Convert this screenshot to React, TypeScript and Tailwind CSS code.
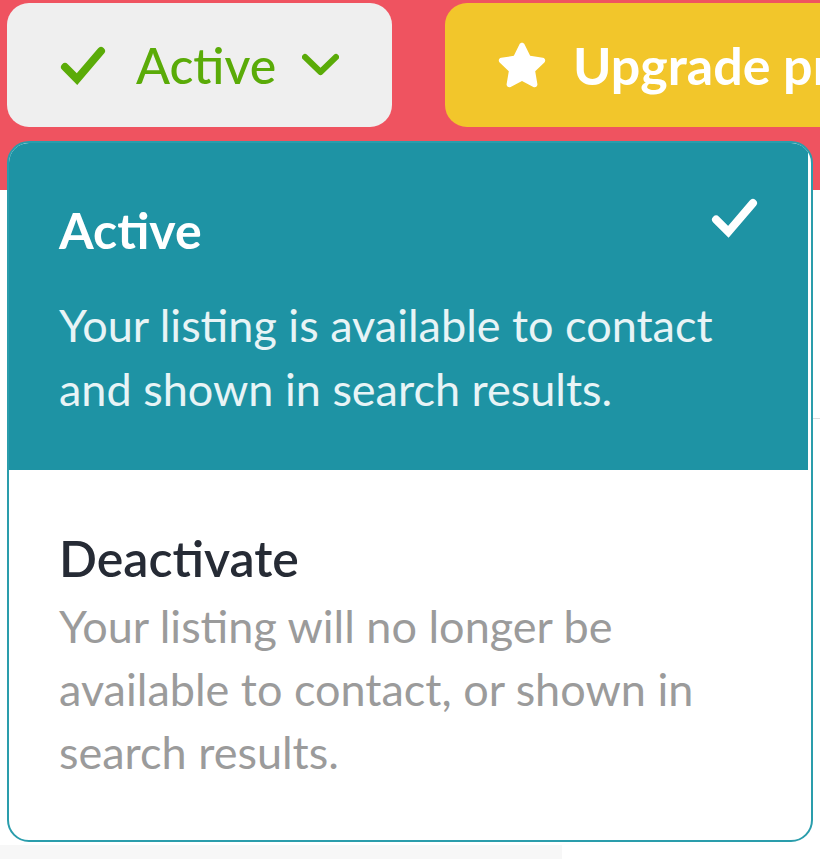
import React from 'react';
import { FaStar } from 'react-icons/fa';

const ChevronDown: React.FC<{ className?: string }> = ({ className }) => (
  <svg viewBox="0 0 37 24" className={className} fill="none">
    <polyline points="3,4 18.5,19 34,4" stroke="currentColor" strokeWidth="6" strokeLinecap="round" strokeLinejoin="round" />
  </svg>
);

const Check: React.FC<{ className?: string }> = ({ className }) => (
  <svg viewBox="0 0 46 40" className={className} fill="none">
    <polyline points="5,22 17,34 41,6" stroke="currentColor" strokeWidth="8" strokeLinecap="round" strokeLinejoin="miter" />
  </svg>
);

interface StatusOption {
  title: string;
  description: string;
  selected: boolean;
}

const options: StatusOption[] = [
  {
    title: 'Active',
    description: 'Your listing is available to contact and shown in search results.',
    selected: true,
  },
  {
    title: 'Deactivate',
    description: 'Your listing will no longer be available to contact, or shown in search results.',
    selected: false,
  },
];

export default function App() {
  return (
    <div className="relative w-[820px] h-[859px] overflow-hidden bg-white flex flex-col font-['Lato','Open_Sans',sans-serif]">
      <header className="h-[190px] shrink-0 bg-[#ef5360] flex items-start gap-[53px] pl-[7px] pt-[3px]">
        <button className="w-[385px] h-[124px] shrink-0 rounded-[22px] bg-[#efefef] flex items-center pl-[53px] text-[#5aab08]">
          <Check className="w-[46px] h-[40px] shrink-0" />
          <span className="ml-[30px] text-[50px] leading-none font-medium shrink-0">Active</span>
          <ChevronDown className="ml-[26px] w-[37px] h-[24px] shrink-0" />
        </button>
        <button className="w-[420px] h-[124px] shrink-0 rounded-[22px] bg-[#f2c62b] flex items-center pl-[52px] text-white">
          <FaStar className="w-[50px] h-[48px] shrink-0" />
          <span className="ml-[26px] text-[52px] leading-none font-bold whitespace-nowrap shrink-0">Upgrade profile</span>
        </button>
      </header>

      <main className="flex-1 flex flex-col">
        <div className="h-[228px]" />
        <div className="ml-auto w-[8px] h-px bg-[#dddddd]" />
        <div className="mt-auto w-[562px] h-[14px] bg-[#f7f7f7]" />
      </main>

      <div className="absolute left-[7px] top-[141px] w-[806px] h-[701px] rounded-[22px] border-2 border-[#2a9dac] bg-white overflow-hidden">
        {options.map((opt) =>
          opt.selected ? (
            <div key={opt.title} className="bg-[#1e93a4] mr-[3px] h-[327px] pl-[50px] pr-[50px] pt-[57px] text-white">
              <div className="flex items-start justify-between">
                <h3 className="text-[50px] leading-[60px] font-bold">{opt.title}</h3>
                <Check className="w-[47px] h-[41px] mt-[-3px] shrink-0" />
              </div>
              <p className="mt-[33px] text-[45px] leading-[64px] text-[#e8f4f6]">{opt.description}</p>
            </div>
          ) : (
            <div key={opt.title} className="pl-[50px] pr-[60px] pt-[58px]">
              <h3 className="text-[50px] leading-[60px] font-semibold text-[#262b35]">{opt.title}</h3>
              <p className="mt-[7px] text-[45px] leading-[63px] text-[#9b9b9b]">{opt.description}</p>
            </div>
          )
        )}
      </div>
    </div>
  );
}
